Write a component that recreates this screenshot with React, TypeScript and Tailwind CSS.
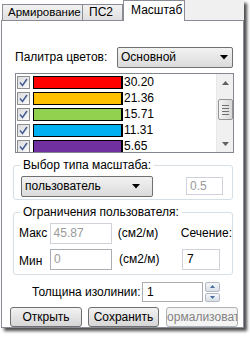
import React from "react";

const rows = [
  { c: "#ff0000", v: "30.20" },
  { c: "#ffc000", v: "21.36" },
  { c: "#92d050", v: "15.71" },
  { c: "#00b0f0", v: "11.31" },
  { c: "#7030a0", v: "5.65" },
];

function Check() {
  return (
    <div className="w-[13px] h-[13px] border border-[#8e8f8f] bg-gradient-to-br from-[#dcdcdc] to-[#fbfbfb] flex items-center justify-center shrink-0">
      <svg width="9" height="9" viewBox="0 0 9 9">
        <path d="M1 4.5 L3.5 7.5 L8 1" fill="none" stroke="#4a5f97" strokeWidth="1.6" />
      </svg>
    </div>
  );
}

function Arrow() {
  return (
    <svg width="8" height="5" viewBox="0 0 8 5" className="shrink-0">
      <path d="M0 0 H8 L4 4.5 Z" fill="#000" />
    </svg>
  );
}

export default function App() {
  return (
    <div className="w-[250px] h-[339px] bg-white font-['Liberation_Sans',sans-serif] text-[11px] leading-[13px] text-black pl-[1px]">
      <div className="w-[243px] bg-[#f0f0f0] shadow-[3px_3px_3px_rgba(0,0,0,0.7)]">
        {/* tab strip */}
        <div className="h-[20px] flex items-end pl-[1px] bg-white">
          <div className="h-[16px] w-[81px] border border-b-0 border-[#898c95] bg-gradient-to-b from-[#f2f2f2] to-[#e0e0e0] flex items-center pl-[5px] text-[11.5px] whitespace-nowrap overflow-hidden">
            Армирование
          </div>
          <div className="h-[16px] w-[40px] border border-b-0 border-l-0 border-[#898c95] bg-gradient-to-b from-[#f2f2f2] to-[#e0e0e0] flex items-center pl-[6px] text-[12px]">
            ПС2
          </div>
          <div className="relative z-10 -mb-[1px] h-[21px] w-[62px] border border-b-0 border-[#898c95] bg-white flex items-start pt-[3px] pl-[7px] text-[12px]">
            Масштаб
          </div>
          <div className="flex-1 h-full bg-[#f0f0f0]" />
        </div>
        {/* panel */}
        <div className="h-[308px] border border-[#898c95] bg-white flex flex-col">
          {/* palette row */}
          <div className="mt-[26px] h-[21px] flex items-center text-[12px]">
            <div className="ml-[13px] w-[102px]">Палитра цветов:</div>
            <div className="w-[116px] h-[21px] border border-[#707070] rounded-[2px] bg-gradient-to-b from-[#f2f2f2] to-[#dbdbdb] flex items-center justify-between pl-[3px] pr-[4px]">
              <span>Основной</span>
              <Arrow />
            </div>
          </div>
          {/* list */}
          <div className="ml-[13px] mt-[5px] w-[219px] h-[80px] border border-[#828790] flex overflow-hidden">
            <div className="flex-1 flex flex-col overflow-hidden">
              {rows.map((r) => (
                <div key={r.v} className="h-[16px] shrink-0 flex items-center pl-[1px]">
                  <Check />
                  <div
                    className="ml-[3px] w-[90px] h-[13px] border border-black border-r-2 shrink-0"
                    style={{ backgroundColor: r.c }}
                  />
                  <span className="ml-[1px] text-[12px]">{r.v}</span>
                </div>
              ))}
            </div>
            <div className="w-[17px] bg-[#f0f0f0] border-l border-[#e8e8e8] flex flex-col items-center">
              <div className="h-[17px] flex items-center justify-center">
                <svg width="7" height="4" viewBox="0 0 7 4"><path d="M0 4 L3.5 0 L7 4 Z" fill="#606060" /></svg>
              </div>
              <div className="mt-[8px] w-[15px] h-[21px] border border-[#959595] rounded-[2px] bg-gradient-to-r from-[#f3f3f3] to-[#d8d8d8] flex flex-col items-center justify-center gap-[2px]">
                <div className="w-[7px] h-[1px] bg-[#707070]" />
                <div className="w-[7px] h-[1px] bg-[#707070]" />
                <div className="w-[7px] h-[1px] bg-[#707070]" />
                <div className="w-[7px] h-[1px] bg-[#707070]" />
              </div>
              <div className="flex-1" />
              <div className="h-[17px] flex items-center justify-center">
                <svg width="7" height="4" viewBox="0 0 7 4"><path d="M0 0 L7 0 L3.5 4 Z" fill="#606060" /></svg>
              </div>
            </div>
          </div>
          {/* group 1 */}
          <div className="relative ml-[11px] mt-[12px] w-[220px] h-[35px] border border-[#d5dfe5] rounded-[3px]">
            <span className="absolute -top-[7px] left-[6px] bg-white px-[3px] text-[12px]">Выбор типа масштаба:</span>
            <div className="mt-[10px] flex items-start">
              <div className="ml-[7px] w-[132px] h-[21px] border border-[#707070] rounded-[2px] bg-gradient-to-b from-[#f2f2f2] to-[#dbdbdb] flex items-center justify-between pl-[3px] pr-[12px] text-[12px]">
                <span>пользователь</span>
                <Arrow />
              </div>
              <div className="ml-[33px] mt-[1px] w-[37px] h-[18px] border border-[#cfd3d9] flex items-center pl-[3px] text-[12px] text-[#9a9a9a]">
                0.5
              </div>
            </div>
          </div>
          {/* group 2 */}
          <div className="relative ml-[11px] mt-[12px] w-[220px] h-[63px] border border-[#d5dfe5] rounded-[3px] text-[12px]">
            <span className="absolute -top-[7px] left-[6px] bg-white px-[3px]">Ограничения пользователя:</span>
            <div className="mt-[10px] h-[21px] flex items-center">
              <span className="ml-[5px] w-[31px]">Макс</span>
              <div className="w-[63px] h-[21px] border border-[#cfd3d9] flex items-center pl-[3px] text-[#9a9a9a]">45.87</div>
              <span className="ml-[6px] w-[64px]">(см2/м)</span>
              <span>Сечение:</span>
            </div>
            <div className="mt-[5px] h-[21px] flex items-center">
              <span className="ml-[5px] w-[31px] mt-[3px]">Мин</span>
              <div className="w-[62px] h-[21px] border border-[#abadb3] flex items-center pl-[3px] text-[#9a9a9a]">0</div>
              <span className="ml-[7px] w-[63px]">(см2/м)</span>
              <div className="w-[38px] h-[21px] border border-[#cfd3d9] flex items-center pl-[4px]">7</div>
            </div>
          </div>
          {/* thickness */}
          <div className="mt-[7px] h-[20px] flex items-center text-[12px]">
            <span className="ml-[30px] w-[110px]">Толщина изолинии:</span>
            <div className="w-[61px] h-[20px] border border-[#abadb3] flex items-center pl-[4px]">1</div>
            <div className="ml-[2px] w-[15px] h-[20px] flex flex-col gap-[1px]">
              <div className="flex-1 border border-[#b5bac2] rounded-[2px] bg-gradient-to-b from-[#f5f7fa] to-[#d9e0ea] flex items-center justify-center">
                <svg width="5" height="3" viewBox="0 0 5 3"><path d="M0 3 L2.5 0 L5 3 Z" fill="#4a6d99" /></svg>
              </div>
              <div className="flex-1 border border-[#b5bac2] rounded-[2px] bg-gradient-to-b from-[#f5f7fa] to-[#d9e0ea] flex items-center justify-center">
                <svg width="5" height="3" viewBox="0 0 5 3"><path d="M0 0 L5 0 L2.5 3 Z" fill="#4a6d99" /></svg>
              </div>
            </div>
          </div>
          {/* buttons */}
          <div className="mt-[5px] flex text-[12px]">
            <div className="ml-[8px] w-[72px] h-[20px] border border-[#707070] rounded-[3px] bg-gradient-to-b from-[#f2f2f2] to-[#d6d6d6] flex items-center justify-center">
              Открыть
            </div>
            <div className="ml-[6px] w-[71px] h-[20px] border border-[#707070] rounded-[3px] bg-gradient-to-b from-[#f2f2f2] to-[#d6d6d6] flex items-center justify-center">
              Сохранить
            </div>
            <div className="ml-[7px] w-[72px] h-[20px] border border-[#adb2b5] rounded-[3px] bg-[#f4f4f4] overflow-hidden flex items-center justify-center text-[#838383] whitespace-nowrap">
              <span className="shrink-0">Нормализовать</span>
            </div>
          </div>
        </div>
      </div>
    </div>
  );
}
